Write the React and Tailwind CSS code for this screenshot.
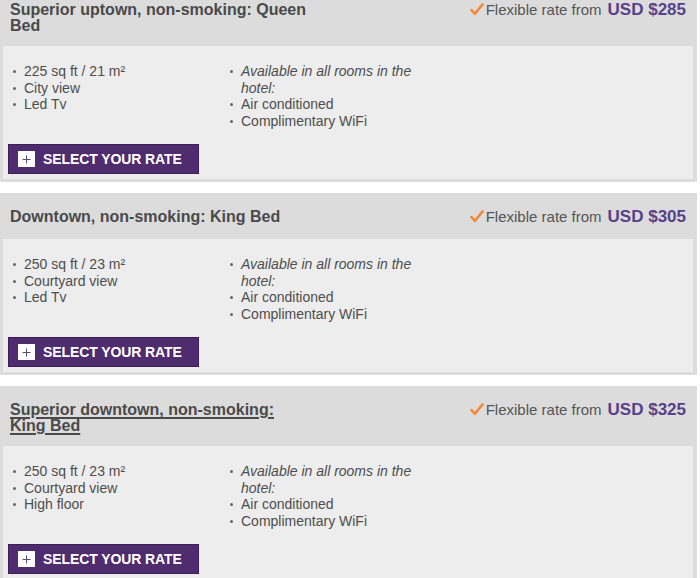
import React from "react";

const rooms = [
  {
    title: ["Superior uptown, non-smoking: Queen", "Bed"],
    price: "USD $285",
    feats: ["225 sq ft / 21 m²", "City view", "Led Tv"],
    underline: false,
  },
  {
    title: ["Downtown, non-smoking: King Bed"],
    price: "USD $305",
    feats: ["250 sq ft / 23 m²", "Courtyard view", "Led Tv"],
    underline: false,
  },
  {
    title: ["Superior downtown, non-smoking:", "King Bed"],
    price: "USD $325",
    feats: ["250 sq ft / 23 m²", "Courtyard view", "High floor"],
    underline: true,
  },
];

function Bullet({ children, italic }) {
  return (
    <li className="flex">
      <span className="w-[11px] shrink-0 flex items-start pt-[7px]">
        <span className="block w-[3px] h-[3px] rounded-full bg-[#666]"></span>
      </span>
      <span className={italic ? "italic" : ""}>{children}</span>
    </li>
  );
}

function Check() {
  return (
    <svg width="14" height="13" viewBox="0 0 14 13" className="shrink-0 mr-[2px] mt-[3px]">
      <path d="M1.5 7.2 L5 10.8 L12.5 1.5" fill="none" stroke="#f0883a" strokeWidth="2.6" strokeLinecap="round" strokeLinejoin="round" />
    </svg>
  );
}

function Card({ room }) {
  return (
    <div className="w-[697px] bg-[#dcdcdc] pl-[3px] pr-[4px] pb-[3px]">
      <div className="flex justify-between items-start pl-[7px] pr-[7px] pt-[14px] pb-[12px]">
        <div
          className={
            "text-[16px] leading-[16px] font-bold text-[#4a4a4a] mt-[2px]" +
            (room.underline ? " underline underline-offset-[2px] decoration-[1.5px]" : "")
          }
        >
          {room.title.map((t, i) => (
            <div key={i}>{t}</div>
          ))}
        </div>
        <div className="flex items-start leading-[20px]">
          <Check />
          <span className="text-[15px] text-[#555] mr-[6px]">Flexible rate from</span>
          <span className="text-[17px] font-bold text-[#57418a]">{room.price}</span>
        </div>
      </div>
      <div className="bg-[#ededed] h-[133px] pl-[5px] pt-[17px] flex flex-col">
        <div className="flex text-[14px] leading-[16.5px] text-[#4d4d4d]">
          <ul className="w-[222px] pl-[5px]">
            {room.feats.map((f) => (
              <Bullet key={f}>{f}</Bullet>
            ))}
          </ul>
          <ul className="w-[205px]">
            <Bullet italic>Available in all rooms in the hotel:</Bullet>
            <Bullet>Air conditioned</Bullet>
            <Bullet>Complimentary WiFi</Bullet>
          </ul>
        </div>
        <div className="mt-auto mb-[5px]">
          <button className="h-[30px] w-[191px] bg-[#4f2c6d] border border-[#3c1f55] flex items-center pl-[9px]">
            <span className="w-[17px] h-[16px] bg-white flex items-center justify-center">
              <svg width="9" height="9" viewBox="0 0 9 9">
                <path d="M4.5 0.5 V8.5 M0.5 4.5 H8.5" stroke="#5a4a6e" strokeWidth="1" />
              </svg>
            </span>
            <span className="ml-[8px] text-white font-bold text-[14px] tracking-[-0.1px]">SELECT YOUR RATE</span>
          </button>
        </div>
      </div>
    </div>
  );
}

export default function App() {
  return (
    <div
      className="w-[700px] h-[578px] overflow-hidden bg-white"
      style={{ fontFamily: '"Liberation Sans", Arial, Helvetica, sans-serif' }}
    >
      <div className="-mt-[14px] flex flex-col gap-[11px]">
        {rooms.map((r, i) => (
          <Card key={i} room={r} />
        ))}
      </div>
    </div>
  );
}
